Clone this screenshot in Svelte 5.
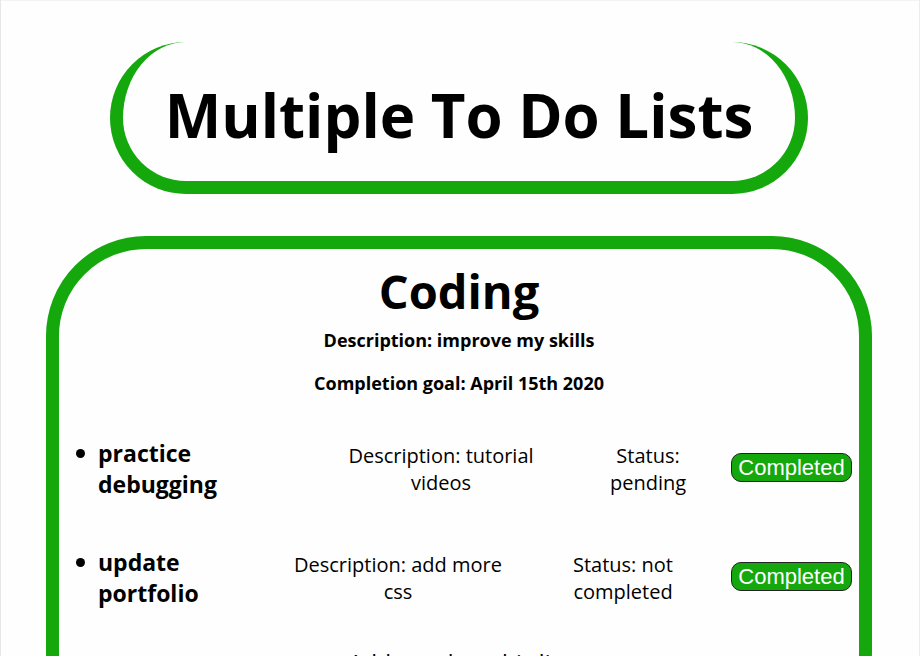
<script>
  const tasks = [
    { name: 'practice debugging', description: 'tutorial videos', status: 'pending' },
    { name: 'update portfolio', description: 'add more css', status: 'not completed' }
  ];
</script>

<div class="page">
  <header>
    <h1>Multiple To Do Lists</h1>
  </header>

  <main class="card">
    <h2>Coding</h2>
    <p class="meta">Description: improve my skills</p>
    <p class="meta">Completion goal: April 15th 2020</p>

    <ul>
      {#each tasks as task}
        <li class:wide={task.status === 'not completed'}>
          <h3>{task.name}</h3>
          <p class="description">Description: {task.description}</p>
          <p class="status">Status: {task.status}</p>
          <button type="button">Completed</button>
        </li>
      {/each}
    </ul>

    <p class="add">Add a task to this list</p>
  </main>
</div>

<style>
  :global(body) {
    background: #fefefe;
  }

  :global(#app) {
    height: 100vh;
    overflow: hidden;
  }

  .page {
    box-sizing: border-box;
    min-height: 100vh;
    padding: 42px 48px 0 46px;
    box-shadow: inset 1px 0 #e6e6e6, inset -1px 0 #ececec, inset 0 1px #f3f3f3;
    font-family: 'Segoe UI', 'Open Sans', 'Noto Sans', sans-serif;
    color: #000;
    text-align: center;
  }

  header {
    margin: 0 64px 42px;
    padding: 31px 24px 24px;
    border: 13px solid #14a80d;
    border-top: 0;
    border-radius: 76px;
  }

  h1 {
    margin: 0;
    font-size: 60px;
    line-height: 84px;
    font-weight: 700;
    white-space: nowrap;
  }

  .card {
    box-sizing: border-box;
    padding: 12px 7px 60px;
    border: 13px solid #14a80d;
    border-radius: 100px;
  }

  h2 {
    margin: 0;
    font-size: 47px;
    line-height: 60px;
  }

  .meta {
    margin: 8px 0 20px;
    font-size: 18px;
    line-height: 23px;
    font-weight: 700;
  }

  .meta + .meta {
    margin-top: 0;
  }

  ul {
    margin: 0;
    padding: 23px 0 0 32px;
    list-style: none;
  }

  li {
    position: relative;
    display: flex;
    min-height: 109px;
  }

  li::before {
    content: '';
    position: absolute;
    left: -22px;
    top: 11px;
    width: 9px;
    height: 9px;
    border-radius: 50%;
    background: #000;
  }

  h3 {
    flex: 0 0 140px;
    margin: 0 auto 0 0;
    font-size: 23px;
    line-height: 31px;
    text-align: left;
  }

  li p {
    margin: 4px 0 0;
    font-size: 20px;
    line-height: 27px;
  }

  .description {
    width: 190px;
    margin-right: 67px;
  }

  .status {
    width: 90px;
    margin-right: 38px;
  }

  .wide .description {
    width: 210px;
    margin-right: 65px;
  }

  .wide .status {
    width: 110px;
    margin-right: 53px;
  }

  .add {
    margin: -8px 0 0;
    font-size: 23px;
    line-height: 31px;
  }

  button {
    flex: 0 0 121px;
    align-self: flex-start;
    height: 29px;
    margin-top: 15px;
    padding: 0;
    border: 1px solid #222;
    border-radius: 10px;
    background: #14a80d;
    color: #fff;
    font-family: 'Liberation Sans', Arial, sans-serif;
    font-size: 22px;
    line-height: 26px;
  }
</style>
